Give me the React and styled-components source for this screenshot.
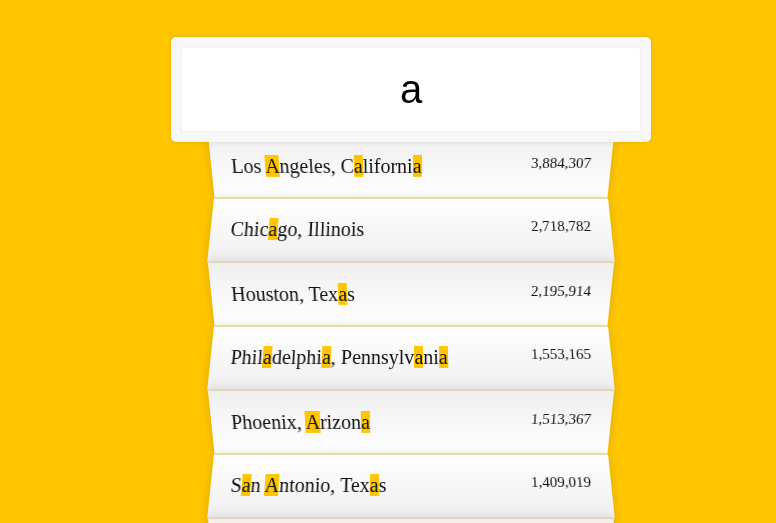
import React from "react";
import styled, { createGlobalStyle, css } from "styled-components";

const GlobalStyle = createGlobalStyle`
  html {
    box-sizing: border-box;
    background: #ffc600;
    font-family: "Liberation Serif", "Times New Roman", serif;
    font-size: 20px;
    font-weight: 200;
  }
  *, *::before, *::after { box-sizing: inherit; }
  body { margin: 0; }
`;

const SearchForm = styled.form`
  width: 400px;
  margin: 27px 0 0 211px;
`;

const SearchInput = styled.input`
  display: block;
  margin: 0 0 0 -10%;
  width: 120%;
  padding: 20px;
  text-align: center;
  outline: 0;
  border: 10px solid #f7f7f7;
  position: relative;
  top: 10px;
  z-index: 2;
  border-radius: 5px;
  font-family: "Liberation Sans", Arial, sans-serif;
  font-size: 40px;
  color: #000;
  background: #fff;
  box-shadow: 0 0 5px rgba(0, 0, 0, 0.12), inset 0 0 2px rgba(0, 0, 0, 0.19);
`;

const Suggestions = styled.ul`
  margin: 0;
  padding: 0;
  position: relative;
`;

const Item = styled.li`
  list-style: none;
  border-bottom: 1px solid #d8d8d8;
  box-shadow: 0 0 10px rgba(0, 0, 0, 0.14);
  margin: 0;
  padding: 20px;
  display: flex;
  justify-content: space-between;
  color: #111;
  ${(p) =>
    p.$even
      ? css`
          transform: perspective(100px) rotateX(3deg) translateY(2px) scale(1.001);
          background: linear-gradient(to bottom, #ffffff 0%, #efefef 100%);
        `
      : css`
          transform: perspective(100px) rotateX(-3deg) translateY(3px);
          background: linear-gradient(to top, #ffffff 0%, #efefef 100%);
        `}
`;

const Name = styled.span``;

const Population = styled.span`
  font-size: 15px;
`;

const Hl = styled.span`
  background: #ffc600;
`;

const cities = [
  ["Los Angeles, California", "3,884,307"],
  ["Chicago, Illinois", "2,718,782"],
  ["Houston, Texas", "2,195,914"],
  ["Philadelphia, Pennsylvania", "1,553,165"],
  ["Phoenix, Arizona", "1,513,367"],
  ["San Antonio, Texas", "1,409,019"],
  ["San Diego, California", "1,355,896"],
  ["Dallas, Texas", "1,257,676"],
  ["San Jose, California", "998,537"],
];

function highlight(text, q) {
  const parts = text.split(new RegExp(`(${q})`, "gi"));
  return parts.map((p, i) =>
    i % 2 === 1 ? <Hl key={i}>{p}</Hl> : <React.Fragment key={i}>{p}</React.Fragment>
  );
}

export default function App() {
  const q = "a";
  return (
    <>
      <GlobalStyle />
      <SearchForm onSubmit={(e) => e.preventDefault()}>
        <SearchInput type="text" defaultValue={q} />
        <Suggestions>
          {cities.map(([name, pop], i) => (
            <Item key={name} $even={i % 2 === 1}>
              <Name>{highlight(name, q)}</Name>
              <Population>{pop}</Population>
            </Item>
          ))}
        </Suggestions>
      </SearchForm>
    </>
  );
}
